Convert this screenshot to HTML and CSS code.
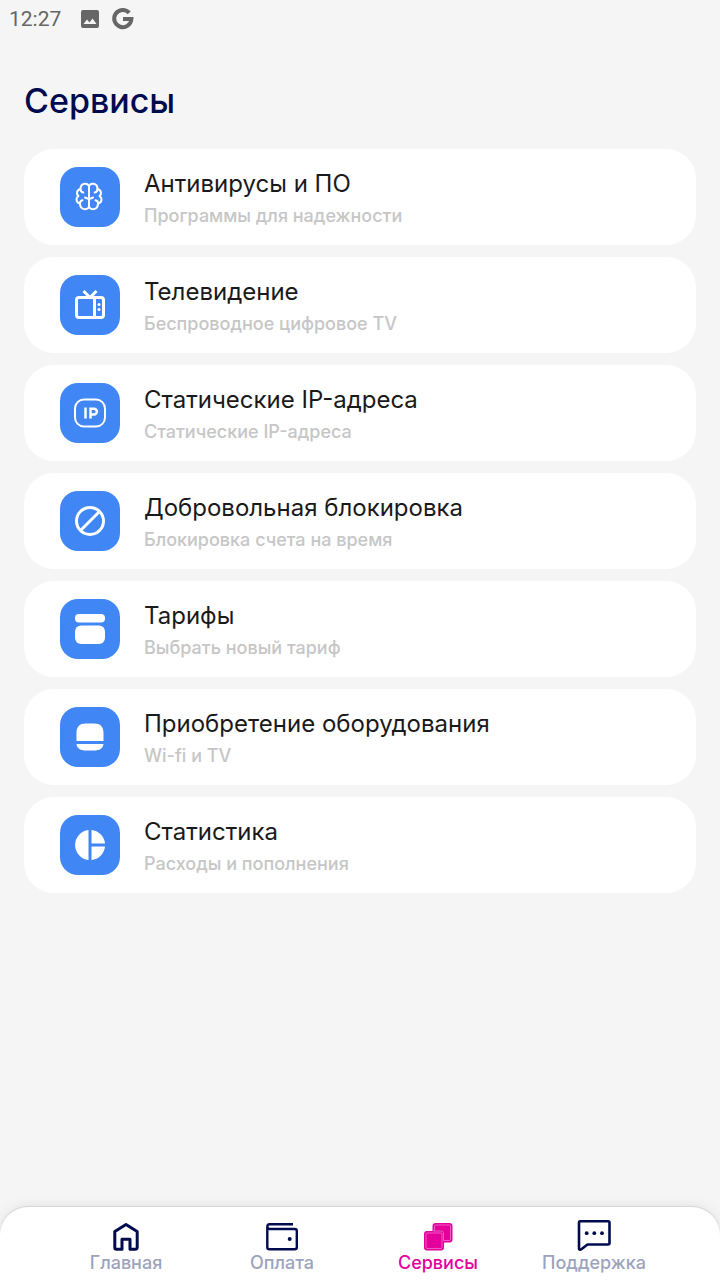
FILE: index.html
```html
<!DOCTYPE html>
<html lang="ru">
<head>
<meta charset="utf-8">
<meta name="viewport" content="width=device-width, initial-scale=1">
<title>Сервисы</title>
<link rel="stylesheet" href="styles.css">
</head>
<body>
<div class="app">
  <header class="status">
    <time class="clock">12:27</time>
    <svg class="status-picture" width="18" height="18" viewBox="0 0 18 18" aria-hidden="true"><path fill="currentColor" fill-rule="evenodd" d="M2 0h14a2 2 0 0 1 2 2v14a2 2 0 0 1-2 2H2a2 2 0 0 1-2-2V2a2 2 0 0 1 2-2zM2.500 14h13l-4-5.500-3 4-2.500-3z"/></svg>
    <svg class="status-google" width="22" height="22" viewBox="0 0 22 22" aria-hidden="true"><path fill="none" stroke="currentColor" stroke-width="4" d="M17.200 4.800A8.600 8.600 0 1 0 19.400 11H11"/></svg>
  </header>
  <main class="content">
    <h1 class="heading">Сервисы</h1>
    <ul class="services">
      <li><a class="card" href="#antivirus">
        <span class="tile"><svg width="32" height="32" viewBox="0 0 32 32" aria-hidden="true"><g fill="none" stroke="currentColor" stroke-width="2" stroke-linecap="round" stroke-linejoin="round"><path d="M15 5.500V25.500M15 5.500C14 1.500 6.500 1.500 6.500 8C2.500 9 2 13 4.500 15C1 17.500 2.500 22 6 22.500C6 29.500 14 29.500 15 25.500"/><path d="M15 5.500C16 1.500 23.500 1.500 23.500 8C27.500 9 28 13 25.500 15C29 17.500 27.500 22 24 22.500C24 29.500 16 29.500 15 25.500"/><path d="M6.500 8c0 2 1 3.200 2.800 3.500M6 22.500c-.2-2 .8-3 2.500-3.300M23.500 8c0 2-1 3.200-2.800 3.500M24 22.500c.2-2-.8-3-2.500-3.300M11 16.500l4 1.700l4-1.700"/></g></svg></span>
        <span class="text"><span class="title">Антивирусы и ПО</span><span class="note">Программы для надежности</span></span>
      </a></li>
      <li><a class="card" href="#tv">
        <span class="tile"><svg width="32" height="32" viewBox="0 0 32 32" aria-hidden="true"><g fill="none" stroke="currentColor" stroke-width="3"><rect x="2.500" y="8.500" width="27" height="20" rx="2.500"/><path d="M20.500 8.500v20M9.500 2l6.500 6.500L22.500 2"/></g><circle cx="25" cy="15.500" r="1.500" fill="currentColor"/><circle cx="25" cy="20.500" r="1.500" fill="currentColor"/></svg></span>
        <span class="text"><span class="title">Телевидение</span><span class="note">Беспроводное цифровое TV</span></span>
      </a></li>
      <li><a class="card" href="#ip">
        <span class="tile"><svg width="32" height="32" viewBox="0 0 32 32" aria-hidden="true"><g fill="none" stroke="currentColor"><rect x="1" y="2.500" width="30" height="27" rx="9" stroke-width="2"/><path stroke-width="2.500" d="M11.500 10.500v11M16.500 21.500v-9.800h3.500a2.900 2.900 0 0 1 0 5.800h-3.500"/></g></svg></span>
        <span class="text"><span class="title">Статические IP-адреса</span><span class="note">Статические IP-адреса</span></span>
      </a></li>
      <li><a class="card" href="#block">
        <span class="tile"><svg width="32" height="32" viewBox="0 0 32 32" aria-hidden="true"><g fill="none" stroke="currentColor" stroke-width="3"><circle cx="16" cy="16" r="13.500"/><path d="M6.500 25.500l19-19"/></g></svg></span>
        <span class="text"><span class="title">Добровольная блокировка</span><span class="note">Блокировка счета на время</span></span>
      </a></li>
      <li><a class="card" href="#tariffs">
        <span class="tile"><svg width="32" height="32" viewBox="0 0 32 32" aria-hidden="true"><rect x="1" y="1" width="30" height="8.500" rx="4" fill="currentColor"/><rect x="1" y="12.500" width="30" height="18.500" rx="6" fill="currentColor"/></svg></span>
        <span class="text"><span class="title">Тарифы</span><span class="note">Выбрать новый тариф</span></span>
      </a></li>
      <li><a class="card" href="#equipment">
        <span class="tile"><svg width="32" height="32" viewBox="0 0 32 32" aria-hidden="true"><path fill="currentColor" d="M2.500 20v-8C2.500 5.500 5.500 2.500 12 2.500h8c6.500 0 9.500 3 9.500 9.500v8zM2.500 23h27c-.6 4.500-4 6.500-9.500 6.500h-8C6.500 29.500 3.100 27.500 2.500 23z"/></svg></span>
        <span class="text"><span class="title">Приобретение оборудования</span><span class="note">Wi-fi и TV</span></span>
      </a></li>
      <li><a class="card" href="#stats">
        <span class="tile"><svg width="32" height="32" viewBox="0 0 32 32" aria-hidden="true"><path fill="currentColor" d="M14.500 1v30A15.100 15.100 0 0 1 14.500 1zM17.500 1A15.100 15.100 0 0 1 31 14.500H17.500zM17.500 17.500H31A15.100 15.100 0 0 1 17.500 31z"/></svg></span>
        <span class="text"><span class="title">Статистика</span><span class="note">Расходы и пополнения</span></span>
      </a></li>
    </ul>
  </main>
  <nav class="tabs">
    <a class="tab" href="#home"><svg width="36" height="32" viewBox="0 0 36 32" aria-hidden="true"><path fill="none" stroke="currentColor" stroke-width="3" stroke-linejoin="round" d="M6.800 10.500L18 3.500l11.200 7V26.500a1.800 1.800 0 0 1-1.800 1.800H22V18.200h-8v10.100H8.600a1.800 1.800 0 0 1-1.800-1.800z"/></svg><span class="label">Главная</span></a>
    <a class="tab" href="#payment"><svg width="36" height="32" viewBox="0 0 36 32" aria-hidden="true"><path fill="none" stroke="currentColor" stroke-width="2.400" stroke-linejoin="round" d="M29 3.200H5.500A2.500 2.500 0 0 0 3.300 5.500v20.800a2 2 0 0 0 2 2h25.500a2 2 0 0 0 2-2V10a2 2 0 0 0-2-2H5.500A2.400 2.400 0 0 1 3.300 5.600"/><circle cx="25.700" cy="18" r="2" fill="currentColor"/></svg><span class="label">Оплата</span></a>
    <a class="tab tab-active" href="#services" aria-current="page"><svg width="36" height="32" viewBox="0 0 36 32" aria-hidden="true"><rect x="12.500" y="2" width="20" height="19.500" rx="3" fill="currentColor"/><rect x="14.500" y="4" width="16" height="15.500" rx="1" class="inset"/><rect x="4" y="10" width="20" height="19.500" rx="3" fill="currentColor"/><rect x="6" y="12" width="16" height="15.500" rx="1" class="inset"/><path class="inset" d="M13 10h8.500a2 2 0 0 1 2 2v8"/></svg><span class="label">Сервисы</span></a>
    <a class="tab" href="#support"><svg width="36" height="32" viewBox="0 0 36 32" aria-hidden="true"><path fill="none" stroke="currentColor" stroke-width="2.600" stroke-linejoin="round" d="M4 .300H32a1.500 1.500 0 0 1 1.500 1.500V22a1.500 1.500 0 0 1-1.500 1.500H11.500L5 28.500c-1 .600-2 .100-2-1V1.500A1.200 1.200 0 0 1 4 .300z"/><g fill="currentColor"><circle cx="10.700" cy="12.200" r="1.900"/><circle cx="18.300" cy="12.200" r="1.900"/><circle cx="26" cy="12.200" r="1.900"/></g></svg><span class="label">Поддержка</span></a>
  </nav>
</div>
</body>
</html>
```
FILE: styles.css
```css
* {
  box-sizing: border-box;
}

body {
  margin: 0;
  background: #f5f5f5;
  font-family: Inter, "Liberation Sans", sans-serif;
}

a {
  color: inherit;
  text-decoration: none;
}

svg {
  display: block;
  overflow: visible;
}

.app {
  display: flex;
  flex-direction: column;
  min-height: 100vh;
}

.status {
  display: flex;
  align-items: center;
  height: 37px;
  padding-left: 9px;
  color: #666;
}

.clock {
  font: 400 21px/24px Roboto, sans-serif;
}

.status-picture {
  margin-left: 20px;
}

.status-google {
  margin-left: 13px;
}

.content {
  flex: 1;
  padding: 40px 24px 24px;
}

.heading {
  margin: 0 0 24px;
  color: #000b4f;
  font-size: 34px;
  font-weight: 500;
  line-height: 48px;
}

.services {
  display: grid;
  gap: 12px;
  margin: 0;
  padding: 0;
  list-style: none;
}

.card {
  display: flex;
  align-items: center;
  gap: 24px;
  min-height: 96px;
  padding: 0 36px;
  border-radius: 30px;
  background: #fff;
}

.tile {
  display: grid;
  flex: none;
  place-items: center;
  width: 60px;
  height: 60px;
  border-radius: 18px;
  background: #4086f5;
  color: #fff;
}

.text {
  display: grid;
  padding-top: 2px;
}

.title {
  color: #1a1a1a;
  font-size: 24px;
  font-weight: 400;
  line-height: 36px;
}

.note {
  color: #c6c6c6;
  font-size: 18px;
  font-weight: 500;
  line-height: 28px;
}

.tabs {
  display: grid;
  grid-template-columns: repeat(4, 1fr);
  min-height: 73px;
  padding: 14px 48px 6px;
  border-radius: 28px 28px 0 0;
  background: #fff;
  box-shadow: 0 0 14px #00000018, 0 -1px 1px #00000018;
}

.tab {
  display: flex;
  flex-direction: column;
  align-items: center;
  color: #000b4f;
}

.label {
  color: #9da3bd;
  font-size: 18px;
  font-weight: 500;
  line-height: 20px;
}

.tab-active,
.tab-active .label {
  color: #e4009b;
}

.inset {
  fill: none;
  stroke: #f05bc0;
  stroke-width: 1;
}
```
